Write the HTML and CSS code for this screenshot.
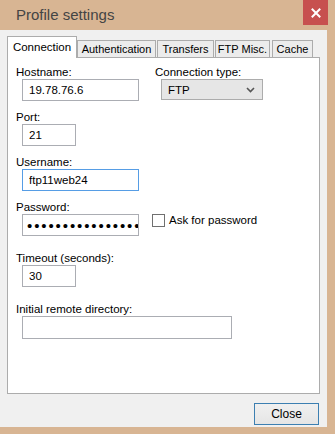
FILE: index.html
```html
<!DOCTYPE html>
<html lang="en">
<head>
  <meta charset="UTF-8" />
  <title>Profile settings</title>
  <link rel="stylesheet" href="styles.css">
</head>
<body>

  <div class="window">
    <!-- Title bar -->
    <div class="titlebar">
      <span class="title">Profile settings</span>
      <button class="close-x" aria-label="Close">
        <svg width="10" height="10" viewBox="0 0 10 10">
          <path d="M1.5 1.5 L8.5 8.5 M8.5 1.5 L1.5 8.5" stroke="#fff" stroke-width="2" stroke-linecap="square" />
        </svg>
      </button>
    </div>

    <div class="client">
      <!-- Tabs -->
      <div class="tabs">
        <div class="tab active">Connection</div>
        <div class="tab t-auth">Authentication</div>
        <div class="tab t-transfers">Transfers</div>
        <div class="tab t-misc">FTP Misc.</div>
        <div class="tab t-cache">Cache</div>
      </div>

      <div class="panel">
        <div class="row">
          <div class="field host">
            <label>Hostname:</label>
            <input class="text wide" type="text" value="19.78.76.6" readonly>
          </div>
          <div class="field type">
            <label>Connection type:</label>
            <div class="select">
              <span>FTP</span>
              <svg width="9" height="6" viewBox="0 0 9 6">
                <path d="M1 1 L4.5 4.5 L8 1" fill="none" stroke="#555" stroke-width="1.6" />
              </svg>
            </div>
          </div>
        </div>

        <div class="field gap">
          <label>Port:</label>
          <input class="text short" type="text" value="21" readonly>
        </div>

        <div class="field gap">
          <label>Username:</label>
          <input class="text wide focused" type="text" value="ftp11web24" readonly>
        </div>

        <div class="field gap">
          <label>Password:</label>
          <div class="row">
            <input class="text wide pass" type="password" value="secretpassword123" readonly>
            <label class="check"><span class="box"></span>Ask for password</label>
          </div>
        </div>

        <div class="field gap-lg">
          <label>Timeout (seconds):</label>
          <input class="text short" type="text" value="30" readonly>
        </div>

        <div class="field gap-lg">
          <label>Initial remote directory:</label>
          <input class="text long" type="text" value="" readonly>
        </div>
      </div>

      <div class="footer">
        <button class="btn">Close</button>
      </div>
    </div>
  </div>

</body>
</html>
```

FILE: styles.css
```css
body {
  margin: 0;
  background: #d8b593;
  font-family: 'Liberation Sans', Arial, sans-serif;
  font-size: 11.5px;
  color: #000;
}

.window {
  width: 335px;
  height: 434px;
  background: #d8b593;
  display: flex;
  flex-direction: column;
}

.titlebar {
  height: 30px;
  display: flex;
  justify-content: space-between;
  align-items: flex-start;
}

.title {
  font-size: 15px;
  color: #444;
  padding: 6px 0 0 16px;
}

.close-x {
  width: 25px;
  height: 25px;
  margin-right: 7px;
  border: none;
  padding: 0;
  background: #c7504f;
  display: flex;
  align-items: center;
  justify-content: center;
}

.client {
  width: 327px;
  height: 397px;
  background: #f0f0f0;
  box-sizing: border-box;
  padding: 6px 7px 0 7px;
}

.tabs {
  display: flex;
  align-items: flex-end;
  height: 21px;
  position: relative;
  z-index: 1;
}

.tab {
  flex-shrink: 0;
  height: 17px;
  line-height: 16px;
  font-size: 11px;
  text-align: center;
  white-space: nowrap;
  background: #ececec;
  border: 1px solid #acacac;
  border-bottom: none;
  box-sizing: border-box;
}

.t-auth { width: 79px; }
.t-transfers { width: 57px; margin-left: 1px; }
.t-misc { width: 55px; margin-left: 1px; }
.t-cache { width: 41px; margin-left: 2px; }

.tab.active {
  width: 70px;
  height: 22px;
  line-height: 20px;
  font-size: 11.5px;
  background: #fff;
  margin-bottom: -1px;
}

.panel {
  height: 337px;
  box-sizing: border-box;
  background: #fff;
  border: 1px solid #acacac;
  padding: 8px 8px 0 8px;
}

.row {
  display: flex;
  align-items: flex-start;
}

.field label {
  display: block;
  height: 13px;
  line-height: 13px;
}

.field.type {
  margin-left: 16px;
}

.field.gap { margin-top: 10px; }
.field.gap-lg { margin-top: 16px; }

.text {
  display: block;
  margin-left: 6px;
  height: 22px;
  box-sizing: border-box;
  border: 1px solid #abadb3;
  padding: 0 6px;
  font-family: inherit;
  font-size: 11.5px;
  color: #000;
  outline: none;
}

.text.wide { width: 117px; }
.text.short { width: 54px; }
.text.long { width: 210px; height: 23px; }

.text.focused {
  border-color: #569de5;
}

.text.pass {
  letter-spacing: 1.9px;
  font-size: 15px;
  padding-left: 4px;
  padding-right: 0;
}

.select {
  margin-left: 6px;
  width: 102px;
  height: 21px;
  box-sizing: border-box;
  background: #e6e6e6;
  border: 1px solid #acacac;
  display: flex;
  align-items: center;
  justify-content: space-between;
  padding: 0 7px 0 6px;
}

.field .check {
  display: flex;
  align-items: center;
  height: 13px;
  margin: 0 0 0 13px;
  gap: 4px;
}

.box {
  width: 13px;
  height: 13px;
  box-sizing: border-box;
  border: 1px solid #707070;
  background: #fff;
}

.footer {
  display: flex;
  justify-content: flex-end;
  padding: 9px 1px 0 0;
}

.btn {
  width: 65px;
  height: 22px;
  border: 1px solid #3c7fb1;
  background: linear-gradient(#f0f0f0, #e5e5e5);
  font-family: inherit;
  font-size: 12px;
  color: #000;
  padding: 0;
}
```
